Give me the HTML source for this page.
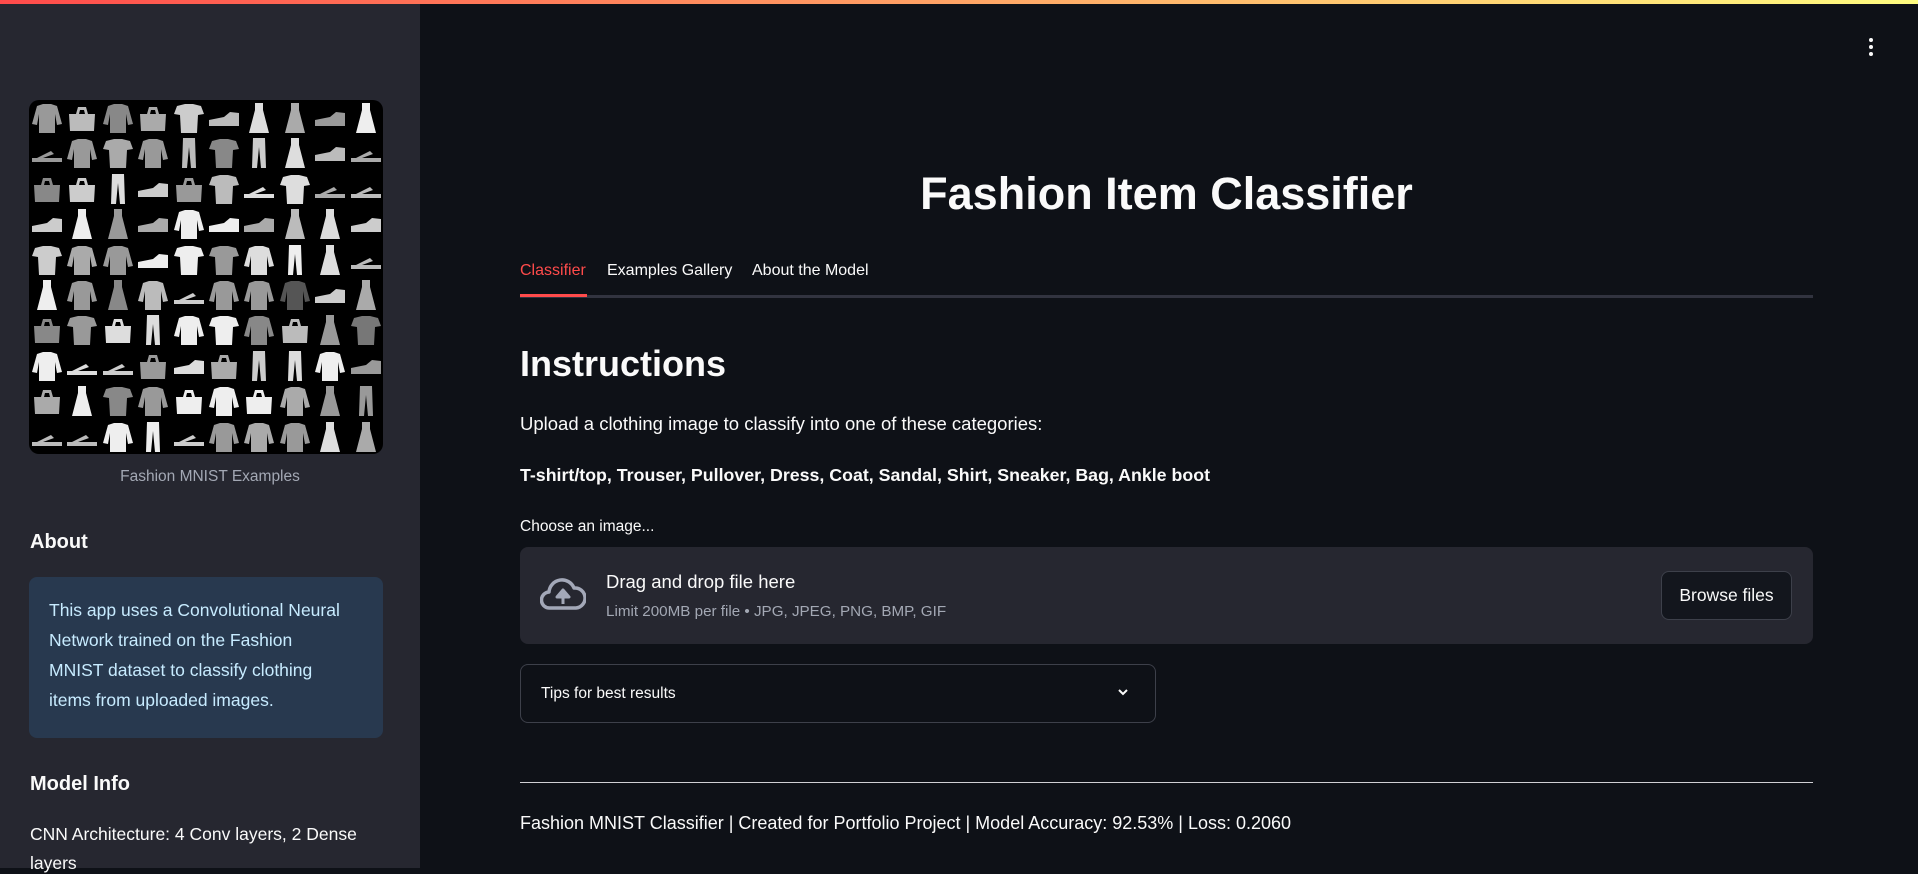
<!DOCTYPE html>
<html><head><meta charset="utf-8"><style>
*{margin:0;padding:0;box-sizing:border-box}
body{width:1918px;height:868px;overflow:hidden;background:#0e1117;font-family:"Liberation Sans",sans-serif;color:#fafafa;position:relative}
.bar{position:absolute;left:0;top:0;width:1918px;height:4px;background:linear-gradient(90deg,#ff4b4b,#fffd80);z-index:5}
.side{position:absolute;left:0;top:0;width:420px;height:868px;background:#262730}
.abs{position:absolute;white-space:nowrap}
</style></head><body>
<div class="bar"></div>
<div class="side">
<svg class="abs" style="left:29px;top:100px" width="354" height="354" viewBox="0 0 354 354">
<defs>
<clipPath id="c"><rect width="354" height="354" rx="10"/></clipPath>
<path id="s" d="M8 6L14 4L22 4L28 6L33 24L28 25L26 14L26 33L10 33L10 14L8 25L3 24Z"/>
<path id="t" d="M6 6L14 4L22 4L30 6L33 14L27 15L26 33L10 33L9 15L3 14Z"/>
<path id="p" d="M12 3L24 3L25 33L20 33L18 12L16 33L11 33Z"/>
<path id="b" d="M5 14L31 14L30 31L6 31Z M12 14L14 7L22 7L24 14L21 14L20 10L16 10L15 14Z"/>
<path id="h" d="M3 20L18 17L24 12L33 13L33 26L3 26Z"/>
<path id="d" d="M14 3L22 3L22 10L28 33L8 33L14 10Z"/>
<path id="n" d="M3 23L33 23L33 27L3 27Z M8 23L22 16L25 19L14 23Z"/>
</defs>
<g clip-path="url(#c)"><rect width="354" height="354" fill="#000"/>
<g id="g">
<use href="#s" x="0" y="0" fill="#999"/><use href="#b" x="35" y="0" fill="#bbb"/><use href="#s" x="71" y="0" fill="#888"/><use href="#b" x="106" y="0" fill="#aaa"/><use href="#t" x="142" y="0" fill="#ccc"/><use href="#h" x="177" y="0" fill="#bbb"/><use href="#d" x="212" y="0" fill="#ddd"/><use href="#d" x="248" y="0" fill="#aaa"/><use href="#h" x="283" y="0" fill="#999"/><use href="#d" x="319" y="0" fill="#eee"/>
<use href="#n" x="0" y="35" fill="#999"/><use href="#s" x="35" y="35" fill="#999"/><use href="#t" x="71" y="35" fill="#aaa"/><use href="#s" x="106" y="35" fill="#999"/><use href="#p" x="142" y="35" fill="#bbb"/><use href="#t" x="177" y="35" fill="#888"/><use href="#p" x="212" y="35" fill="#ccc"/><use href="#d" x="248" y="35" fill="#ddd"/><use href="#h" x="283" y="35" fill="#bbb"/><use href="#n" x="319" y="35" fill="#aaa"/>
<use href="#b" x="0" y="71" fill="#888"/><use href="#b" x="35" y="71" fill="#ccc"/><use href="#p" x="71" y="71" fill="#ddd"/><use href="#h" x="106" y="71" fill="#ccc"/><use href="#b" x="142" y="71" fill="#999"/><use href="#t" x="177" y="71" fill="#bbb"/><use href="#n" x="212" y="71" fill="#ddd"/><use href="#t" x="248" y="71" fill="#ddd"/><use href="#n" x="283" y="71" fill="#aaa"/><use href="#n" x="319" y="71" fill="#bbb"/>
<use href="#h" x="0" y="106" fill="#ccc"/><use href="#d" x="35" y="106" fill="#eee"/><use href="#d" x="71" y="106" fill="#999"/><use href="#h" x="106" y="106" fill="#aaa"/><use href="#s" x="142" y="106" fill="#eee"/><use href="#h" x="177" y="106" fill="#eee"/><use href="#h" x="212" y="106" fill="#aaa"/><use href="#d" x="248" y="106" fill="#bbb"/><use href="#d" x="283" y="106" fill="#ddd"/><use href="#h" x="319" y="106" fill="#ccc"/>
<use href="#t" x="0" y="142" fill="#ccc"/><use href="#s" x="35" y="142" fill="#aaa"/><use href="#s" x="71" y="142" fill="#999"/><use href="#h" x="106" y="142" fill="#eee"/><use href="#t" x="142" y="142" fill="#eee"/><use href="#t" x="177" y="142" fill="#999"/><use href="#s" x="212" y="142" fill="#ddd"/><use href="#p" x="248" y="142" fill="#eee"/><use href="#d" x="283" y="142" fill="#ddd"/><use href="#n" x="319" y="142" fill="#bbb"/>
<use href="#d" x="0" y="177" fill="#eee"/><use href="#s" x="35" y="177" fill="#999"/><use href="#d" x="71" y="177" fill="#888"/><use href="#s" x="106" y="177" fill="#bbb"/><use href="#n" x="142" y="177" fill="#ccc"/><use href="#s" x="177" y="177" fill="#999"/><use href="#s" x="212" y="177" fill="#999"/><use href="#s" x="248" y="177" fill="#555"/><use href="#h" x="283" y="177" fill="#ccc"/><use href="#d" x="319" y="177" fill="#aaa"/>
<use href="#b" x="0" y="212" fill="#888"/><use href="#t" x="35" y="212" fill="#999"/><use href="#b" x="71" y="212" fill="#ddd"/><use href="#p" x="106" y="212" fill="#ddd"/><use href="#s" x="142" y="212" fill="#eee"/><use href="#t" x="177" y="212" fill="#eee"/><use href="#s" x="212" y="212" fill="#888"/><use href="#b" x="248" y="212" fill="#bbb"/><use href="#d" x="283" y="212" fill="#999"/><use href="#t" x="319" y="212" fill="#777"/>
<use href="#s" x="0" y="248" fill="#eee"/><use href="#n" x="35" y="248" fill="#ddd"/><use href="#n" x="71" y="248" fill="#ccc"/><use href="#b" x="106" y="248" fill="#999"/><use href="#h" x="142" y="248" fill="#ddd"/><use href="#b" x="177" y="248" fill="#aaa"/><use href="#p" x="212" y="248" fill="#ccc"/><use href="#p" x="248" y="248" fill="#ddd"/><use href="#s" x="283" y="248" fill="#eee"/><use href="#h" x="319" y="248" fill="#999"/>
<use href="#b" x="0" y="283" fill="#aaa"/><use href="#d" x="35" y="283" fill="#eee"/><use href="#t" x="71" y="283" fill="#888"/><use href="#s" x="106" y="283" fill="#999"/><use href="#b" x="142" y="283" fill="#eee"/><use href="#s" x="177" y="283" fill="#eee"/><use href="#b" x="212" y="283" fill="#eee"/><use href="#s" x="248" y="283" fill="#aaa"/><use href="#d" x="283" y="283" fill="#999"/><use href="#p" x="319" y="283" fill="#999"/>
<use href="#n" x="0" y="319" fill="#bbb"/><use href="#n" x="35" y="319" fill="#bbb"/><use href="#s" x="71" y="319" fill="#eee"/><use href="#p" x="106" y="319" fill="#eee"/><use href="#n" x="142" y="319" fill="#ccc"/><use href="#s" x="177" y="319" fill="#999"/><use href="#s" x="212" y="319" fill="#aaa"/><use href="#s" x="248" y="319" fill="#999"/><use href="#d" x="283" y="319" fill="#ddd"/><use href="#d" x="319" y="319" fill="#aaa"/>
</g></g></svg>
<div class="abs" style="left:0;width:420px;text-align:center;top:468px;font-size:15.5px;color:#a3a8b4">Fashion MNIST Examples</div>
<div class="abs" style="left:30px;top:531px;font-size:20px;font-weight:bold">About</div>
<div class="abs" style="left:29px;top:577px;width:354px;height:161px;background:#28394f;border-radius:8px;padding:18px 20px;font-size:17.5px;line-height:30px;color:#c7ebff">This app uses a Convolutional Neural<br>Network trained on the Fashion<br>MNIST dataset to classify clothing<br>items from uploaded images.</div>
<div class="abs" style="left:30px;top:773px;font-size:20px;font-weight:bold">Model Info</div>
<div class="abs" style="left:30px;top:824px;font-size:17.5px">CNN Architecture: 4 Conv layers, 2 Dense</div>
<div class="abs" style="left:30px;top:853px;font-size:17.5px">layers</div>
</div>
<svg class="abs" style="left:1866px;top:37px" width="10" height="20"><circle cx="5" cy="3" r="2" fill="#fafafa"/><circle cx="5" cy="10" r="2" fill="#fafafa"/><circle cx="5" cy="17" r="2" fill="#fafafa"/></svg>
<div class="abs" style="left:520px;width:1293px;text-align:center;top:168px;font-size:45px;font-weight:bold">Fashion Item Classifier</div>
<div class="abs" style="left:520px;top:262px;font-size:16px;color:#ff4b4b">Classifier</div>
<div class="abs" style="left:607px;top:262px;font-size:16px">Examples Gallery</div>
<div class="abs" style="left:752px;top:262px;font-size:16px">About the Model</div>
<div class="abs" style="left:520px;top:295px;width:1293px;height:3px;background:#31333f"></div>
<div class="abs" style="left:520px;top:294px;width:67px;height:3px;background:#ff4b4b"></div>
<div class="abs" style="left:520px;top:343px;font-size:36px;font-weight:bold">Instructions</div>
<div class="abs" style="left:520px;top:413px;font-size:18.5px">Upload a clothing image to classify into one of these categories:</div>
<div class="abs" style="left:520px;top:465px;font-size:17.8px;font-weight:bold">T-shirt/top, Trouser, Pullover, Dress, Coat, Sandal, Shirt, Sneaker, Bag, Ankle boot</div>
<div class="abs" style="left:520px;top:518px;font-size:15.5px">Choose an image...</div>
<div class="abs" style="left:520px;top:547px;width:1293px;height:97px;background:#262730;border-radius:8px"></div>
<svg class="abs" style="left:540px;top:575px" width="46" height="38" viewBox="0 0 46 38"><path d="M12 33H10A8 8 0 0 1 9 17A13 13 0 0 1 34 13A10 10 0 0 1 36 33H12Z" fill="none" stroke="#a3a8b8" stroke-width="3.5" stroke-linejoin="round"/><path d="M23 29V21M17 22L23 15L29 22Z" fill="#a3a8b8" stroke="#a3a8b8" stroke-width="3" stroke-linejoin="round"/></svg>
<div class="abs" style="left:606px;top:571px;font-size:18.5px">Drag and drop file here</div>
<div class="abs" style="left:606px;top:603px;font-size:15.2px;color:#a3a8b4">Limit 200MB per file • JPG, JPEG, PNG, BMP, GIF</div>
<div class="abs" style="left:1661px;top:571px;width:131px;height:49px;border:1px solid #3d404a;border-radius:8px;background:#13161d;font-size:17.5px;line-height:47px;text-align:center">Browse files</div>
<div class="abs" style="left:520px;top:664px;width:636px;height:59px;border:1px solid #3d404a;border-radius:8px"></div>
<div class="abs" style="left:541px;top:685px;font-size:15.5px">Tips for best results</div>
<svg class="abs" style="left:1117px;top:688px" width="12" height="10"><path d="M2 2L6 6L10 2" fill="none" stroke="#fafafa" stroke-width="2"/></svg>
<div class="abs" style="left:520px;top:782px;width:1293px;height:1px;background:#d0d0d4"></div>
<div class="abs" style="left:520px;top:813px;font-size:18px">Fashion MNIST Classifier | Created for Portfolio Project | Model Accuracy: 92.53% | Loss: 0.2060</div>
</body></html>
